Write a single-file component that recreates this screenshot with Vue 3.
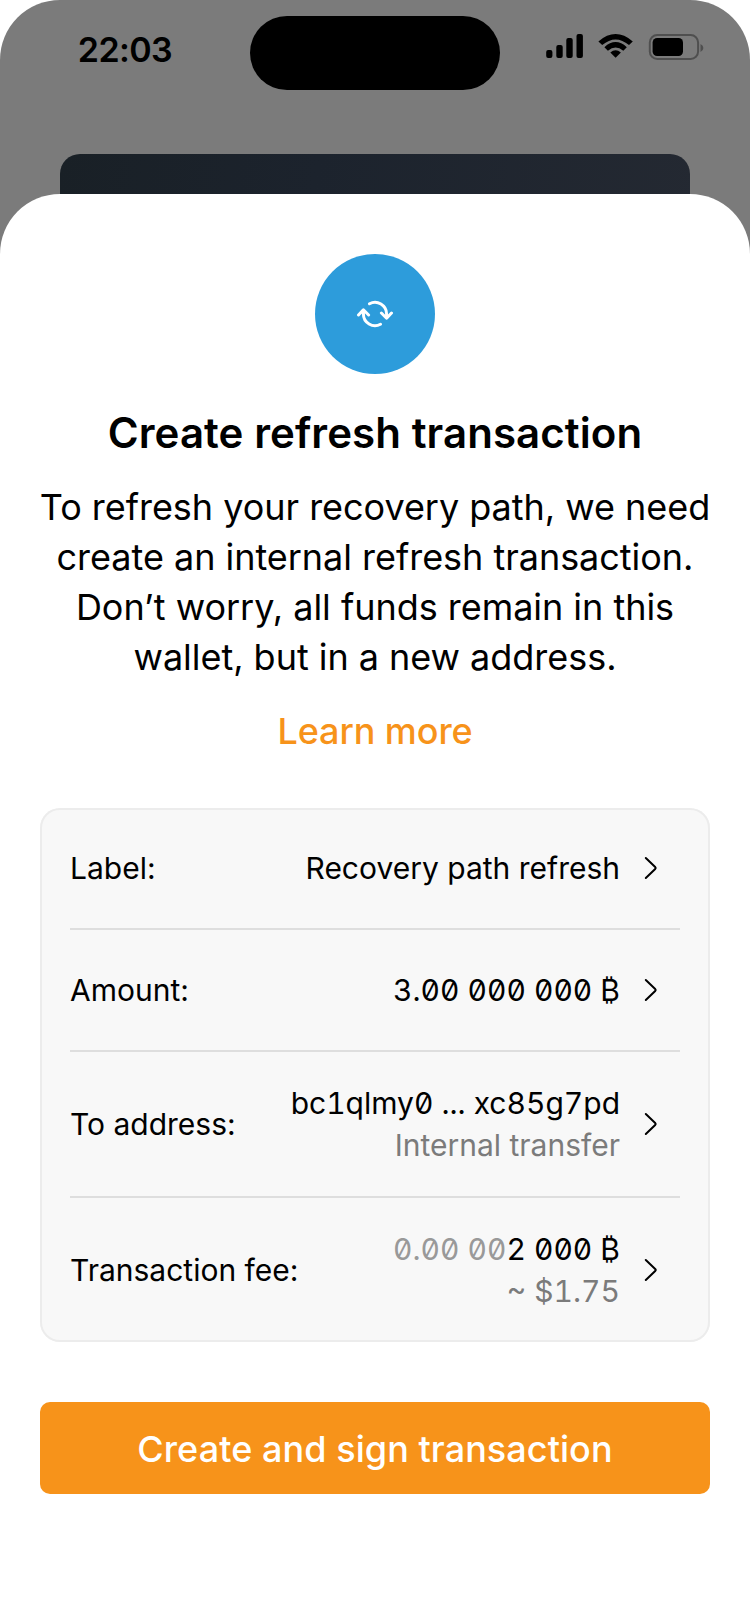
<script setup>
const rows = [
  { label: 'Label:', value: 'Recovery path refresh' },
  { label: 'Amount:', value: '3.00 000 000 ₿', amount: true },
  { label: 'To address:', value: 'bc1qlmy0 ... xc85g7pd', note: 'Internal transfer', address: true },
  { label: 'Transaction fee:', muted: '0.00 00', value: '2 000 ₿', note: '~ $1.75', amount: true },
]
</script>

<template>
  <div class="phone">
    <header class="status">
      <div class="time">22:03</div>
      <div class="island"></div>
      <svg class="indicators" width="160" height="32" viewBox="544 30 160 32">
        <rect x="546.2" y="50" width="6.2" height="8" rx="2" />
        <rect x="556.3" y="45" width="6.4" height="13" rx="2" />
        <rect x="566.3" y="38" width="6.4" height="20" rx="2" />
        <rect x="576.5" y="34" width="6.4" height="24" rx="2" />
        <path d="M598.4 41.4 Q615.6 26.6 632.8 41.4 L629 45.1 Q615.6 33.7 602.2 45.1 Z" />
        <path d="M604.4 47.2 Q615.6 37 626.8 47.2 L623.3 50.7 Q615.6 44.2 607.9 50.7 Z" />
        <path d="M610.3 52.6 Q615.6 48 620.9 52.6 L615.6 57.8 Z" />
        <rect x="649.8" y="35" width="48.3" height="24" rx="7.5" fill="none" stroke="#4f4f4f" stroke-width="2" />
        <rect x="652.6" y="38" width="30.4" height="18" rx="4.5" />
        <path d="M700.5 44 Q703.4 45.4 703.4 48 T700.5 52 Z" fill="#4f4f4f" />
      </svg>
    </header>
    <div class="wallet"></div>

    <main class="sheet">
      <div class="badge">
        <svg width="40" height="30" viewBox="-20 -15 40 30" fill="none" stroke="#fff" stroke-width="3" stroke-linecap="round" stroke-linejoin="round">
          <path d="M-5.5 -10.2 A11.6 11.6 0 0 1 11.6 0 V4 M6.4 -1 L11.6 4.2 L16.5 -1" />
          <path d="M5.5 10.2 A11.6 11.6 0 0 1 -11.6 0 V-4 M-6.4 1 L-11.6 -4.2 L-16.5 1" />
        </svg>
      </div>
      <h1>Create refresh transaction</h1>
      <p class="copy">To refresh your recovery path, we need<br />create an internal refresh transaction.<br />Don’t worry, all funds remain in this<br />wallet, but in a new address.</p>
      <a class="more">Learn more</a>

      <section class="details">
        <div v-for="row in rows" :key="row.label" class="row" :class="{ tall: row.note }">
          <span class="label">{{ row.label }}</span>
          <div class="values">
            <div class="value" :class="{ amount: row.amount, address: row.address }"><span v-if="row.muted" class="muted">{{ row.muted }}</span>{{ row.value }}</div>
            <div v-if="row.note" class="note" :class="{ fiat: row.amount }">{{ row.note }}</div>
          </div>
          <svg class="chevron" width="14" height="24" viewBox="0 0 14 24" fill="none" stroke="#000" stroke-width="2" stroke-linecap="round" stroke-linejoin="round">
            <path d="M1.8 2 L11.2 11 Q12.2 12 11.2 13 L1.8 22" />
          </svg>
        </div>
      </section>

      <button class="submit">Create and sign transaction</button>
    </main>
  </div>
</template>

<style>
body {
  background: #fff;
}
</style>

<style scoped>
.phone {
  box-sizing: border-box;
  display: flex;
  flex-direction: column;
  width: 750px;
  height: 1624px;
  overflow: hidden;
  border-radius: 60px 60px 0 0;
  background: #7b7b7b;
  color: #000;
  font-family: Inter, "Liberation Sans", sans-serif;
}
.status {
  display: grid;
  grid-template-columns: 250px 250px 250px;
  height: 154px;
  padding-top: 16px;
  box-sizing: border-box;
}
.time {
  text-align: center;
  font-size: 34px;
  font-weight: 600;
  line-height: 68px;
  letter-spacing: -0.6px;
}
.island {
  height: 74px;
  border-radius: 37px;
  background: #000;
}
.indicators {
  margin: 14px 0 0 44px;
}
.wallet {
  flex: none;
  width: 630px;
  height: 120px;
  margin: 0 auto -80px;
  border-radius: 20px;
  background: linear-gradient(100deg, #192026, #1c232d 40%, #242932);
}
.sheet {
  flex: 1;
  display: flex;
  flex-direction: column;
  align-items: center;
  padding: 60px 40px 0;
  border-radius: 60px 60px 0 0;
  background: #fff;
  text-align: center;
}
.badge {
  flex: none;
  display: flex;
  align-items: center;
  justify-content: center;
  width: 120px;
  height: 120px;
  border-radius: 50%;
  background: #2d9cdb;
}
h1 {
  margin: 34px 0 0;
  font-size: 42px;
  line-height: 50px;
  font-weight: 600;
  letter-spacing: 0.08px;
  white-space: nowrap;
}
.copy {
  margin: 24px 0 0;
  font-size: 36px;
  line-height: 50px;
  letter-spacing: -0.03px;
  white-space: nowrap;
}
.more {
  margin-top: 24px;
  color: #f7931a;
  font-size: 36px;
  line-height: 50px;
  font-weight: 500;
  letter-spacing: -0.08px;
}
.details {
  box-sizing: border-box;
  width: 670px;
  margin-top: 52px;
  padding: 0 30px;
  border-radius: 20px;
  background: #f8f8f8;
  box-shadow: inset 0 0 0 2px #ececec;
}
.row {
  display: flex;
  align-items: center;
  height: 120px;
  font-size: 30px;
  line-height: 42px;
  white-space: nowrap;
}
.row + .row {
  border-top: 2px solid #dedede;
}
.row.tall {
  height: 144px;
}
.values {
  margin-left: auto;
  text-align: right;
}
.amount,
.address,
.fiat {
  font-feature-settings: "zero" 1, "tnum" 1;
}
.muted {
  color: #999;
}
.note {
  color: #7b7b7b;
}
.chevron {
  margin: 0 22px 0 24px;
}
.submit {
  width: 670px;
  height: 92px;
  margin-top: 60px;
  padding: 2px 0 0;
  border: 0;
  border-radius: 10px;
  background: #f7931a;
  color: #fff;
  font: 500 36px/50px Inter, "Liberation Sans", sans-serif;
  letter-spacing: 0.06px;
}
</style>
